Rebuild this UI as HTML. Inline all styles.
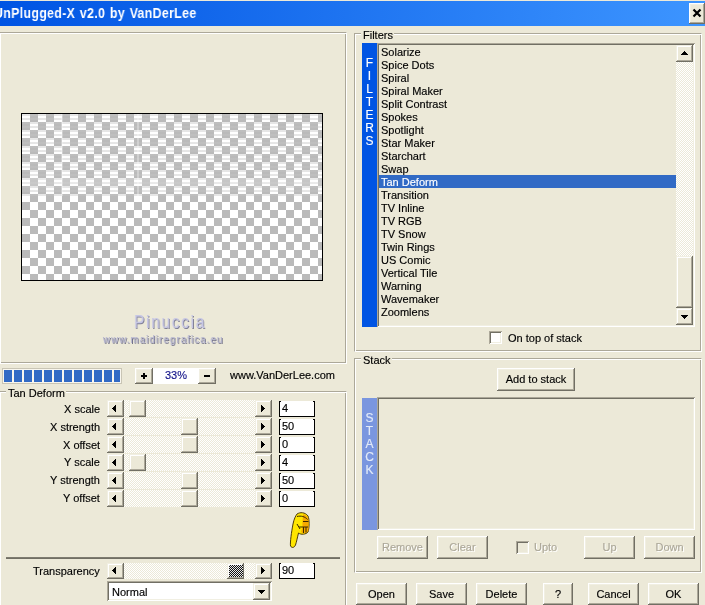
<!DOCTYPE html><html><head><meta charset="utf-8"><style>
*{margin:0;padding:0;box-sizing:border-box}
html,body{width:705px;height:605px;overflow:hidden;background:#ECE9D8;font-family:"Liberation Sans",sans-serif;font-size:11px;color:#000}
.a{position:absolute}
.t{position:absolute;white-space:nowrap;line-height:13px;will-change:transform;-webkit-text-stroke-width:0.15px}
.title{left:0;top:1px;width:705px;height:25px;background:linear-gradient(to right,#0054E3,#3D95FF)}
.r{position:absolute;background:#ECE9D8;box-shadow:inset -1px -1px #716F64,inset 1px 1px #F1EFE2,inset -2px -2px #ACA899,inset 2px 2px #FFFFFF}
.pb{position:absolute;background:#ECE9D8;box-shadow:inset -1px -1px #716F64,inset 1px 1px #FFFFFF,inset -2px -2px #ACA899,inset 2px 2px #F1EFE2}
.s{position:absolute;box-shadow:inset 1px 1px #ACA899,inset -1px -1px #FFFFFF,inset 2px 2px #716F64,inset -2px -2px #F1EFE2}
.e{position:absolute;border-top:1px solid #ACA899;border-left:1px solid #ACA899;border-right:1px solid #fff;border-bottom:1px solid #fff;box-shadow:inset 1px 1px #fff,inset -1px -1px #ACA899}
.chk{background:conic-gradient(#BABABA 25%,#FFFFFF 0 50%,#BABABA 0 75%,#FFFFFF 0) 0 0/16px 16px}
.track{position:absolute;background:conic-gradient(#ECE9D8 25%,#fff 0 50%,#ECE9D8 0 75%,#fff 0) 0 0/2px 2px}
.edit{position:absolute;background:#fff;border-left:1px solid #000;border-right:1px solid #000;border-bottom:1px solid #000}
.edit::before,.edit::after{content:'';position:absolute;top:0;width:1px;height:1px;background:#000}
.edit::before{left:0}.edit::after{right:0}
.cb{position:absolute;width:13px;height:13px;background:#fff;box-shadow:inset 1px 1px #ACA899,inset -1px -1px #fff,inset 2px 2px #716F64,inset -2px -2px #F1EFE2}
.dis{color:#ACA899;text-shadow:1px 1px 0 #fff}
</style></head><body>
<div class="a title"></div>
<div class="t" style="left:-6px;top:5px;font-size:14px;line-height:17px;font-weight:bold;color:#fff;-webkit-text-stroke-width:0;letter-spacing:0.4px;word-spacing:1px;transform:scaleX(0.88);transform-origin:0 0">UnPlugged-X v2.0 by VanDerLee</div>
<div class="pb" style="left:689px;top:3px;width:16px;height:21px;"></div>
<svg class="a" style="left:692px;top:8px" width="10" height="10" viewBox="0 0 10 10"><path d="M1.5 1.5L8.5 8.5M8.5 1.5L1.5 8.5" stroke="#000" stroke-width="2.2"/></svg>
<div class="e" style="left:-1px;top:32px;width:348px;height:332px"></div>
<div class="a" style="left:21px;top:113px;width:302px;height:168px;border:1px solid #000"></div>
<div class="a chk" style="left:22px;top:114px;width:300px;height:166px"></div>
<div class="a" style="left:22px;top:114px;width:300px;height:82px;background:repeating-linear-gradient(180deg,rgba(196,196,196,0.42) 0 2px,rgba(255,255,255,0) 2px 4px)"></div>
<div class="a" style="left:22px;top:178px;width:300px;height:8px;background:rgba(255,255,255,0.18)"></div>
<div class="a" style="left:61px;top:114px;width:2px;height:82px;background:rgba(255,255,255,0.3)"></div>
<div class="a" style="left:137px;top:114px;width:2px;height:82px;background:rgba(255,255,255,0.3)"></div>
<div class="t" style="left:134px;top:311px;font-size:19px;line-height:22px;color:#C6C6E4;text-shadow:1px 1px 0 #7C7C94;letter-spacing:2px;transform:scaleX(0.82);transform-origin:0 0">Pinuccia</div>
<div class="t" style="left:103px;top:333px;font-size:11px;line-height:13px;color:#B4B4D0;text-shadow:1px 1px 0 #6C6C84;letter-spacing:1.25px;transform:scaleX(0.88);transform-origin:0 0">www.maidiregrafica.eu</div>
<div class="a" style="left:2px;top:368px;width:120px;height:16px;border:1px solid #C9C5B5;background:#F8F6EE"></div>
<div class="a" style="left:4px;top:370px;width:8px;height:12px;background:#316AC5"></div>
<div class="a" style="left:14px;top:370px;width:8px;height:12px;background:#316AC5"></div>
<div class="a" style="left:24px;top:370px;width:8px;height:12px;background:#316AC5"></div>
<div class="a" style="left:34px;top:370px;width:8px;height:12px;background:#316AC5"></div>
<div class="a" style="left:44px;top:370px;width:8px;height:12px;background:#316AC5"></div>
<div class="a" style="left:54px;top:370px;width:8px;height:12px;background:#316AC5"></div>
<div class="a" style="left:64px;top:370px;width:8px;height:12px;background:#316AC5"></div>
<div class="a" style="left:74px;top:370px;width:8px;height:12px;background:#316AC5"></div>
<div class="a" style="left:84px;top:370px;width:8px;height:12px;background:#316AC5"></div>
<div class="a" style="left:94px;top:370px;width:8px;height:12px;background:#316AC5"></div>
<div class="a" style="left:104px;top:370px;width:8px;height:12px;background:#316AC5"></div>
<div class="a" style="left:114px;top:370px;width:6px;height:12px;background:#316AC5"></div>
<div class="pb" style="left:135px;top:368px;width:18px;height:16px;"></div>
<div class="a" style="left:141px;top:375px;width:6px;height:2px;background:#000"></div><div class="a" style="left:143px;top:373px;width:2px;height:6px;background:#000"></div>
<div class="a" style="left:153px;top:368px;width:45px;height:16px;background:#fff"></div>
<div class="t" style="left:165px;top:369px;color:#14148A">33%</div>
<div class="pb" style="left:198px;top:368px;width:18px;height:16px;"></div>
<div class="a" style="left:204px;top:375px;width:6px;height:2px;background:#000"></div>
<div class="t" style="left:230px;top:369px;">www.VanDerLee.com</div>
<div class="e" style="left:-1px;top:391px;width:348px;height:230px"></div>
<div class="t" style="left:6px;top:387px;background:#ECE9D8;padding:0 1px 0 2px">Tan Deform</div>
<div class="t" style="right:605px;top:403px">X scale</div>
<div class="track" style="left:124px;top:400px;width:131px;height:17px"></div>
<div class="r" style="left:107px;top:400px;width:17px;height:17px;"></div><div class="a" style="left:112px;top:408px;width:1px;height:1px;background:#000"></div><div class="a" style="left:113px;top:407px;width:1px;height:3px;background:#000"></div><div class="a" style="left:114px;top:406px;width:1px;height:5px;background:#000"></div><div class="a" style="left:115px;top:405px;width:1px;height:7px;background:#000"></div>
<div class="r" style="left:255px;top:400px;width:17px;height:17px;"></div><div class="a" style="left:264px;top:408px;width:1px;height:1px;background:#000"></div><div class="a" style="left:263px;top:407px;width:1px;height:3px;background:#000"></div><div class="a" style="left:262px;top:406px;width:1px;height:5px;background:#000"></div><div class="a" style="left:261px;top:405px;width:1px;height:7px;background:#000"></div>
<div class="r" style="left:129px;top:400px;width:17px;height:17px;"></div>
<div class="edit" style="left:279px;top:401px;width:36px;height:16px"></div>
<div class="t" style="left:282px;top:402px;">4</div>
<div class="t" style="right:605px;top:421px">X strength</div>
<div class="track" style="left:124px;top:418px;width:131px;height:17px"></div>
<div class="r" style="left:107px;top:418px;width:17px;height:17px;"></div><div class="a" style="left:112px;top:426px;width:1px;height:1px;background:#000"></div><div class="a" style="left:113px;top:425px;width:1px;height:3px;background:#000"></div><div class="a" style="left:114px;top:424px;width:1px;height:5px;background:#000"></div><div class="a" style="left:115px;top:423px;width:1px;height:7px;background:#000"></div>
<div class="r" style="left:255px;top:418px;width:17px;height:17px;"></div><div class="a" style="left:264px;top:426px;width:1px;height:1px;background:#000"></div><div class="a" style="left:263px;top:425px;width:1px;height:3px;background:#000"></div><div class="a" style="left:262px;top:424px;width:1px;height:5px;background:#000"></div><div class="a" style="left:261px;top:423px;width:1px;height:7px;background:#000"></div>
<div class="r" style="left:181px;top:418px;width:17px;height:17px;"></div>
<div class="edit" style="left:279px;top:419px;width:36px;height:16px"></div>
<div class="t" style="left:282px;top:420px;">50</div>
<div class="t" style="right:605px;top:439px">X offset</div>
<div class="track" style="left:124px;top:436px;width:131px;height:17px"></div>
<div class="r" style="left:107px;top:436px;width:17px;height:17px;"></div><div class="a" style="left:112px;top:444px;width:1px;height:1px;background:#000"></div><div class="a" style="left:113px;top:443px;width:1px;height:3px;background:#000"></div><div class="a" style="left:114px;top:442px;width:1px;height:5px;background:#000"></div><div class="a" style="left:115px;top:441px;width:1px;height:7px;background:#000"></div>
<div class="r" style="left:255px;top:436px;width:17px;height:17px;"></div><div class="a" style="left:264px;top:444px;width:1px;height:1px;background:#000"></div><div class="a" style="left:263px;top:443px;width:1px;height:3px;background:#000"></div><div class="a" style="left:262px;top:442px;width:1px;height:5px;background:#000"></div><div class="a" style="left:261px;top:441px;width:1px;height:7px;background:#000"></div>
<div class="r" style="left:181px;top:436px;width:17px;height:17px;"></div>
<div class="edit" style="left:279px;top:437px;width:36px;height:16px"></div>
<div class="t" style="left:282px;top:438px;">0</div>
<div class="t" style="right:605px;top:456px">Y scale</div>
<div class="track" style="left:124px;top:454px;width:131px;height:17px"></div>
<div class="r" style="left:107px;top:454px;width:17px;height:17px;"></div><div class="a" style="left:112px;top:462px;width:1px;height:1px;background:#000"></div><div class="a" style="left:113px;top:461px;width:1px;height:3px;background:#000"></div><div class="a" style="left:114px;top:460px;width:1px;height:5px;background:#000"></div><div class="a" style="left:115px;top:459px;width:1px;height:7px;background:#000"></div>
<div class="r" style="left:255px;top:454px;width:17px;height:17px;"></div><div class="a" style="left:264px;top:462px;width:1px;height:1px;background:#000"></div><div class="a" style="left:263px;top:461px;width:1px;height:3px;background:#000"></div><div class="a" style="left:262px;top:460px;width:1px;height:5px;background:#000"></div><div class="a" style="left:261px;top:459px;width:1px;height:7px;background:#000"></div>
<div class="r" style="left:129px;top:454px;width:17px;height:17px;"></div>
<div class="edit" style="left:279px;top:455px;width:36px;height:16px"></div>
<div class="t" style="left:282px;top:456px;">4</div>
<div class="t" style="right:605px;top:474px">Y strength</div>
<div class="track" style="left:124px;top:472px;width:131px;height:17px"></div>
<div class="r" style="left:107px;top:472px;width:17px;height:17px;"></div><div class="a" style="left:112px;top:480px;width:1px;height:1px;background:#000"></div><div class="a" style="left:113px;top:479px;width:1px;height:3px;background:#000"></div><div class="a" style="left:114px;top:478px;width:1px;height:5px;background:#000"></div><div class="a" style="left:115px;top:477px;width:1px;height:7px;background:#000"></div>
<div class="r" style="left:255px;top:472px;width:17px;height:17px;"></div><div class="a" style="left:264px;top:480px;width:1px;height:1px;background:#000"></div><div class="a" style="left:263px;top:479px;width:1px;height:3px;background:#000"></div><div class="a" style="left:262px;top:478px;width:1px;height:5px;background:#000"></div><div class="a" style="left:261px;top:477px;width:1px;height:7px;background:#000"></div>
<div class="r" style="left:181px;top:472px;width:17px;height:17px;"></div>
<div class="edit" style="left:279px;top:473px;width:36px;height:16px"></div>
<div class="t" style="left:282px;top:474px;">50</div>
<div class="t" style="right:605px;top:492px">Y offset</div>
<div class="track" style="left:124px;top:490px;width:131px;height:17px"></div>
<div class="r" style="left:107px;top:490px;width:17px;height:17px;"></div><div class="a" style="left:112px;top:498px;width:1px;height:1px;background:#000"></div><div class="a" style="left:113px;top:497px;width:1px;height:3px;background:#000"></div><div class="a" style="left:114px;top:496px;width:1px;height:5px;background:#000"></div><div class="a" style="left:115px;top:495px;width:1px;height:7px;background:#000"></div>
<div class="r" style="left:255px;top:490px;width:17px;height:17px;"></div><div class="a" style="left:264px;top:498px;width:1px;height:1px;background:#000"></div><div class="a" style="left:263px;top:497px;width:1px;height:3px;background:#000"></div><div class="a" style="left:262px;top:496px;width:1px;height:5px;background:#000"></div><div class="a" style="left:261px;top:495px;width:1px;height:7px;background:#000"></div>
<div class="r" style="left:181px;top:490px;width:17px;height:17px;"></div>
<div class="edit" style="left:279px;top:491px;width:36px;height:16px"></div>
<div class="t" style="left:282px;top:492px;">0</div>
<svg class="a" style="left:286px;top:509px" width="26" height="42" viewBox="286 509 26 42">
<path d="M297 514 C300 512 305 512 308 516 C309.5 519 309.5 528 308 532 C306 534.5 301 535 298.5 533 C297.5 537 296.5 542 295.5 545 C294.5 547.5 292 548.5 290.5 546 C290 542 291.5 532 293 524 C294 519 295.5 516 297 514 Z" fill="#FFE600" stroke="#3A2800" stroke-width="0.9"/>
<path d="M303 514.5 C306 514.5 308.6 517 308.6 521 L308.6 530.5 C307 533.5 303 534 301 532 L302.5 527 L302.5 522 Z" fill="#F29400" opacity="0.75"/>
<path d="M297 516.5 C301 515.5 305 516.5 307.5 519.5 M303 521.5 L308.5 521.5 M299 527 L308 527 M297 524 L300 529 M303.5 527 L303.5 533 M306 527 L306 532.5" stroke="#3A2800" stroke-width="1" fill="none"/>
</svg>
<div class="a" style="left:6px;top:557px;width:334px;height:1px;background:#7E7C70"></div>
<div class="a" style="left:6px;top:558px;width:334px;height:1px;background:#716F64"></div>
<div class="t" style="right:605px;top:565px">Transparency</div>
<div class="track" style="left:124px;top:563px;width:131px;height:16px"></div>
<div class="r" style="left:107px;top:563px;width:17px;height:16px;"></div><div class="a" style="left:112px;top:570px;width:1px;height:1px;background:#000"></div><div class="a" style="left:113px;top:569px;width:1px;height:3px;background:#000"></div><div class="a" style="left:114px;top:568px;width:1px;height:5px;background:#000"></div><div class="a" style="left:115px;top:567px;width:1px;height:7px;background:#000"></div>
<div class="r" style="left:255px;top:563px;width:17px;height:16px;"></div><div class="a" style="left:264px;top:570px;width:1px;height:1px;background:#000"></div><div class="a" style="left:263px;top:569px;width:1px;height:3px;background:#000"></div><div class="a" style="left:262px;top:568px;width:1px;height:5px;background:#000"></div><div class="a" style="left:261px;top:567px;width:1px;height:7px;background:#000"></div>
<div class="r" style="left:227px;top:563px;width:17px;height:16px;"></div>
<div class="a" style="left:229px;top:565px;width:14px;height:12px;background:conic-gradient(#111 25%,#E8E8E8 0 50%,#111 0 75%,#E8E8E8 0) 0 0/2px 2px"></div>
<div class="edit" style="left:279px;top:563px;width:36px;height:16px"></div>
<div class="t" style="left:282px;top:564px;">90</div>
<div class="s" style="left:107px;top:581px;width:165px;height:20px;background:#fff"></div>
<div class="t" style="left:112px;top:586px;">Normal</div>
<div class="r" style="left:253px;top:583px;width:17px;height:17px;"></div><div class="a" style="left:261px;top:593px;width:1px;height:1px;background:#000"></div><div class="a" style="left:260px;top:592px;width:3px;height:1px;background:#000"></div><div class="a" style="left:259px;top:591px;width:5px;height:1px;background:#000"></div><div class="a" style="left:258px;top:590px;width:7px;height:1px;background:#000"></div>
<div class="e" style="left:354px;top:33px;width:348px;height:319px"></div>
<div class="t" style="left:361px;top:29px;background:#ECE9D8;padding:0 1px 0 2px">Filters</div>
<div class="a" style="left:362px;top:43px;width:15px;height:284px;background:#0054E3"></div>
<div class="t" style="left:362px;width:15px;text-align:center;top:56px;color:#fff;font-size:12px;line-height:14px">F</div>
<div class="t" style="left:362px;width:15px;text-align:center;top:69px;color:#fff;font-size:12px;line-height:14px">I</div>
<div class="t" style="left:362px;width:15px;text-align:center;top:82px;color:#fff;font-size:12px;line-height:14px">L</div>
<div class="t" style="left:362px;width:15px;text-align:center;top:95px;color:#fff;font-size:12px;line-height:14px">T</div>
<div class="t" style="left:362px;width:15px;text-align:center;top:108px;color:#fff;font-size:12px;line-height:14px">E</div>
<div class="t" style="left:362px;width:15px;text-align:center;top:121px;color:#fff;font-size:12px;line-height:14px">R</div>
<div class="t" style="left:362px;width:15px;text-align:center;top:134px;color:#fff;font-size:12px;line-height:14px">S</div>
<div class="s" style="left:377px;top:43px;width:318px;height:284px"></div>
<div class="a" style="left:379px;top:175px;width:297px;height:13px;background:#316AC5"></div>
<div class="t" style="left:381px;top:46px;color:#000">Solarize</div>
<div class="t" style="left:381px;top:59px;color:#000">Spice Dots</div>
<div class="t" style="left:381px;top:72px;color:#000">Spiral</div>
<div class="t" style="left:381px;top:85px;color:#000">Spiral Maker</div>
<div class="t" style="left:381px;top:98px;color:#000">Split Contrast</div>
<div class="t" style="left:381px;top:111px;color:#000">Spokes</div>
<div class="t" style="left:381px;top:124px;color:#000">Spotlight</div>
<div class="t" style="left:381px;top:137px;color:#000">Star Maker</div>
<div class="t" style="left:381px;top:150px;color:#000">Starchart</div>
<div class="t" style="left:381px;top:163px;color:#000">Swap</div>
<div class="t" style="left:381px;top:176px;color:#fff">Tan Deform</div>
<div class="t" style="left:381px;top:189px;color:#000">Transition</div>
<div class="t" style="left:381px;top:202px;color:#000">TV Inline</div>
<div class="t" style="left:381px;top:215px;color:#000">TV RGB</div>
<div class="t" style="left:381px;top:228px;color:#000">TV Snow</div>
<div class="t" style="left:381px;top:241px;color:#000">Twin Rings</div>
<div class="t" style="left:381px;top:254px;color:#000">US Comic</div>
<div class="t" style="left:381px;top:267px;color:#000">Vertical Tile</div>
<div class="t" style="left:381px;top:280px;color:#000">Warning</div>
<div class="t" style="left:381px;top:293px;color:#000">Wavemaker</div>
<div class="t" style="left:381px;top:306px;color:#000">Zoomlens</div>
<div class="track" style="left:676px;top:62px;width:17px;height:194px"></div>
<div class="r" style="left:676px;top:45px;width:17px;height:17px;"></div><div class="a" style="left:684px;top:51px;width:1px;height:1px;background:#000"></div><div class="a" style="left:683px;top:52px;width:3px;height:1px;background:#000"></div><div class="a" style="left:682px;top:53px;width:5px;height:1px;background:#000"></div><div class="a" style="left:681px;top:54px;width:7px;height:1px;background:#000"></div>
<div class="r" style="left:676px;top:256px;width:17px;height:52px;"></div>
<div class="r" style="left:676px;top:308px;width:17px;height:17px;"></div><div class="a" style="left:684px;top:318px;width:1px;height:1px;background:#000"></div><div class="a" style="left:683px;top:317px;width:3px;height:1px;background:#000"></div><div class="a" style="left:682px;top:316px;width:5px;height:1px;background:#000"></div><div class="a" style="left:681px;top:315px;width:7px;height:1px;background:#000"></div>
<div class="cb" style="left:489px;top:331px"></div>
<div class="t" style="left:508px;top:332px;">On top of stack</div>
<div class="e" style="left:354px;top:358px;width:348px;height:215px"></div>
<div class="t" style="left:361px;top:354px;background:#ECE9D8;padding:0 1px 0 2px">Stack</div>
<div class="pb" style="left:497px;top:368px;width:78px;height:23px;"></div>
<div class="t" style="left:497px;top:373px;width:78px;text-align:center">Add to stack</div>
<div class="a" style="left:362px;top:398px;width:15px;height:132px;background:#7A96DF"></div>
<div class="t" style="left:362px;width:15px;text-align:center;top:411px;color:#E2EAF8;font-size:12px;line-height:14px">S</div>
<div class="t" style="left:362px;width:15px;text-align:center;top:424px;color:#E2EAF8;font-size:12px;line-height:14px">T</div>
<div class="t" style="left:362px;width:15px;text-align:center;top:437px;color:#E2EAF8;font-size:12px;line-height:14px">A</div>
<div class="t" style="left:362px;width:15px;text-align:center;top:450px;color:#E2EAF8;font-size:12px;line-height:14px">C</div>
<div class="t" style="left:362px;width:15px;text-align:center;top:463px;color:#E2EAF8;font-size:12px;line-height:14px">K</div>
<div class="s" style="left:377px;top:397px;width:318px;height:133px"></div>
<div class="pb" style="left:377px;top:536px;width:51px;height:23px;"></div>
<div class="t dis" style="left:377px;top:541px;width:51px;text-align:center">Remove</div>
<div class="pb" style="left:437px;top:536px;width:51px;height:23px;"></div>
<div class="t dis" style="left:437px;top:541px;width:51px;text-align:center">Clear</div>
<div class="pb" style="left:584px;top:536px;width:51px;height:23px;"></div>
<div class="t dis" style="left:584px;top:541px;width:51px;text-align:center">Up</div>
<div class="pb" style="left:644px;top:536px;width:51px;height:23px;"></div>
<div class="t dis" style="left:644px;top:541px;width:51px;text-align:center">Down</div>
<div class="cb" style="left:516px;top:541px;background:#ECE9D8"></div>
<div class="t dis" style="left:534px;top:541px;">Upto</div>
<div class="pb" style="left:356px;top:583px;width:51px;height:22px;"></div>
<div class="t" style="left:356px;top:588px;width:51px;text-align:center">Open</div>
<div class="pb" style="left:416px;top:583px;width:51px;height:22px;"></div>
<div class="t" style="left:416px;top:588px;width:51px;text-align:center">Save</div>
<div class="pb" style="left:476px;top:583px;width:51px;height:22px;"></div>
<div class="t" style="left:476px;top:588px;width:51px;text-align:center">Delete</div>
<div class="pb" style="left:543px;top:583px;width:30px;height:22px;"></div>
<div class="t" style="left:543px;top:588px;width:30px;text-align:center">?</div>
<div class="pb" style="left:588px;top:583px;width:51px;height:22px;"></div>
<div class="t" style="left:588px;top:588px;width:51px;text-align:center">Cancel</div>
<div class="pb" style="left:648px;top:583px;width:51px;height:22px;"></div>
<div class="t" style="left:648px;top:588px;width:51px;text-align:center">OK</div>
</body></html>
